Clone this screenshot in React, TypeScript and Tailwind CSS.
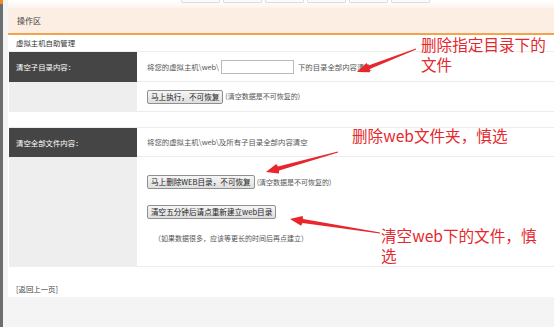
import React from "react";

const F = { fontFamily: '"Noto Sans CJK SC", "Noto Sans", sans-serif' };

function arrowPoints(tx: number, ty: number, px: number, py: number) {
  const dx = px - tx;
  const dy = py - ty;
  const len = Math.hypot(dx, dy);
  const ux = dx / len;
  const uy = dy / len;
  const nx = -uy;
  const ny = ux;
  const headLen = 13;
  const headW = 5;
  const bx = px - ux * headLen;
  const by = py - uy * headLen;
  const pts: [number, number][] = [
    [tx + nx * 0.4, ty + ny * 0.4],
    [bx + nx * 2, by + ny * 2],
    [bx - ux * -1 + nx * headW, by - uy * -1 + ny * headW],
    [px, py],
    [bx - ux * -1 - nx * headW, by - uy * -1 - ny * headW],
    [bx - nx * 2, by - ny * 2],
    [tx - nx * 0.4, ty - ny * 0.4],
  ];
  return pts.map((p) => `${p[0].toFixed(1)},${p[1].toFixed(1)}`).join(" ");
}

function Btn({ children }: { children: React.ReactNode }) {
  return (
    <span className="inline-flex items-center h-[14px] px-[3px] border border-[#8f8f8f] rounded-[2px] bg-gradient-to-b from-[#f6f6f6] to-[#dedede] text-[7.6px] text-[#222] leading-none whitespace-nowrap">
      {children}
    </span>
  );
}

export default function App() {
  return (
    <div
      className="relative w-[554px] h-[327px] bg-[#f4f4f4] flex overflow-hidden"
      style={F}
    >
      {/* left strip */}
      <div className="w-[3px] h-full bg-[#6e6e6e] flex flex-col">
        <div className="h-[4px] bg-[#f08a24]" />
      </div>
      <div className="w-[5px] h-full bg-[#f4f4f4]" />

      {/* main */}
      <div className="flex-1 flex flex-col">
        {/* top tabs area */}
        <div className="h-[8px] bg-gradient-to-b from-white to-[#fdf3ec] flex items-start">
          <div className="ml-[173px] flex gap-[3px]">
            {[0, 1, 2, 3, 4, 5].map((i) => (
              <div
                key={i}
                className="w-[39px] h-[3px] border border-t-0 border-[#dcdcdc] rounded-b-[2px] bg-[#fbfbfb]"
              />
            ))}
          </div>
        </div>
        {/* header */}
        <div className="h-[27px] bg-[#fdeee3] border-b-2 border-[#f5a24c] flex items-center pl-[9px]">
          <span className="text-[8px] text-[#444]">操作区</span>
        </div>
        {/* subtitle */}
        <div className="h-[17px] bg-white flex items-center pl-[8px] border-b border-[#eeeeee]">
          <span className="text-[7.4px] text-[#333]">虚拟主机自助管理</span>
        </div>

        {/* table */}
        <div className="bg-white pl-[1px] grid grid-cols-[128px_1fr]">
          {/* row 1 */}
          <div className="h-[30px] bg-[#454545] flex items-center pl-[7px]">
            <span className="text-[7.4px] text-white">清空子目录内容：</span>
          </div>
          <div className="h-[30px] bg-white flex items-center pl-[10px] border-b border-[#ececec]">
            <span className="text-[7.4px] text-[#555]">将您的虚拟主机\web\</span>
            <span className="ml-[2px] w-[73px] h-[14px] border border-[#bbbbbb] bg-white" />
            <span className="ml-[4px] text-[7.4px] text-[#555]">下的目录全部内容清空</span>
          </div>
          {/* row 2 */}
          <div className="h-[30px] bg-[#eeeeee]" />
          <div className="h-[30px] bg-white flex items-center pl-[10px] border-b border-[#ececec]">
            <Btn>马上执行，不可恢复</Btn>
            <span className="ml-[2px] text-[7px] text-[#555]">(清空数据是不可恢复的)</span>
          </div>
          {/* spacer */}
          <div className="h-[16px] col-span-2 bg-white border-b border-[#ececec]" />
          {/* row 3 */}
          <div className="h-[29px] bg-[#454545] flex items-center pl-[7px]">
            <span className="text-[7.4px] text-white">清空全部文件内容：</span>
          </div>
          <div className="h-[29px] bg-white flex items-center pl-[10px] border-b border-[#ececec]">
            <span className="text-[7.4px] text-[#555]">将您的虚拟主机\web\及所有子目录全部内容清空</span>
          </div>
          {/* row 4 */}
          <div className="h-[110px] bg-[#eeeeee]" />
          <div className="h-[110px] bg-white flex flex-col pl-[10px] border-b border-[#ececec]">
            <div className="mt-[18px] flex items-center">
              <Btn>马上删除WEB目录，不可恢复</Btn>
              <span className="ml-[2px] text-[7px] text-[#555]">(清空数据是不可恢复的)</span>
            </div>
            <div className="mt-[16px] flex items-center">
              <Btn>清空五分钟后请点重新建立web目录</Btn>
            </div>
            <div className="mt-[16px] pl-[7px] text-[7px] text-[#555] leading-none">
              （如果数据很多，应该等更长的时间后再点建立）
            </div>
          </div>
        </div>

        {/* footer */}
        <div className="h-[30px] bg-white flex items-center pl-[8px] pt-[14px]">
          <span className="text-[7.4px] text-[#444]">[返回上一页]</span>
        </div>
        <div className="flex-1 bg-[#f4f4f4]" />
      </div>

      {/* annotations */}
      <svg className="absolute left-0 top-0" width="554" height="327">
        <polygon points={arrowPoints(416, 49, 357, 72)} fill="#e8262b" />
        <polygon points={arrowPoints(338, 152, 266, 172)} fill="#e8262b" />
        <polygon points={arrowPoints(380, 233, 290, 219)} fill="#e8262b" />
      </svg>
      <div className="absolute left-[421px] top-[34px] text-[15.6px] leading-[20px] text-[#e5282d]">
        删除指定目录下的
        <br />
        文件
      </div>
      <div className="absolute left-[352px] top-[125px] text-[15.6px] leading-[20px] text-[#e5282d] whitespace-nowrap">
        删除web文件夹，慎选
      </div>
      <div className="absolute left-[381px] top-[225px] text-[15.6px] leading-[20px] text-[#e5282d]">
        清空web下的文件，慎
        <br />
        选
      </div>
    </div>
  );
}
